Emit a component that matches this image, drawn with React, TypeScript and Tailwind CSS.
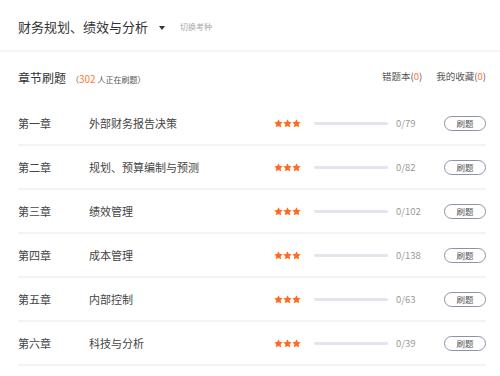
import React from "react";

const chapters = [
  { no: "第一章", name: "外部财务报告决策", total: 79 },
  { no: "第二章", name: "规划、预算编制与预测", total: 82 },
  { no: "第三章", name: "绩效管理", total: 102 },
  { no: "第四章", name: "成本管理", total: 138 },
  { no: "第五章", name: "内部控制", total: 63 },
  { no: "第六章", name: "科技与分析", total: 39 },
];

const Star = () => (
  <svg width="9" height="9" viewBox="0 0 24 24" fill="#ff6a1f">
    <path d="M12 0.5l3.5 7.3 8 1-5.9 5.5 1.6 8L12 18.4l-7.2 3.9 1.6-8L0.5 8.8l8-1z" />
  </svg>
);

export default function App() {
  return (
    <div
      className="w-[500px] h-[376px] bg-white overflow-hidden"
      style={{ fontFamily: '"Microsoft YaHei", "Noto Sans CJK SC", sans-serif' }}
    >
      <div className="flex items-center h-[50px] pl-[18px] pt-[4px]">
        <span className="text-[13px] text-[#333]">财务规划、绩效与分析</span>
        <span className="ml-[11px] mt-[1px] w-0 h-0 border-l-[3px] border-r-[3px] border-t-[4px] border-l-transparent border-r-transparent border-t-[#333]" />
        <span className="ml-[15px] text-[8px] text-[#aaa]">切换考种</span>
      </div>
      <div className="h-[2px] bg-[#f5f5f5]" />

      <div className="pl-[18px] pr-[14px]">
        <div className="flex items-center justify-between h-[50px] pt-[2px]">
          <div className="flex items-baseline">
            <span className="text-[12px] text-[#333]">章节刷题</span>
            <span className="ml-[5px] text-[8px] text-[#555]">
              （<span className="text-[10px] text-[#ff7a33]">302</span> 人正在刷题）
            </span>
          </div>
          <div className="flex gap-[14px] text-[9.5px] text-[#555] pb-[4px]">
            <span>
              错题本(<span className="text-[#ff7a33]">0</span>)
            </span>
            <span>
              我的收藏(<span className="text-[#ff7a33]">0</span>)
            </span>
          </div>
        </div>

        <div>
          {chapters.map((c) => (
            <div
              key={c.no}
              className="flex items-center h-[44px] border-b-2 border-[#f3f3f3]"
            >
              <span className="w-[71px] text-[11px] text-[#444]">{c.no}</span>
              <span className="w-[185px] text-[11px] text-[#444]">{c.name}</span>
              <span className="flex gap-0">
                <Star />
                <Star />
                <Star />
              </span>
              <span className="ml-[13px] w-[74px] h-[3px] rounded-full bg-[#e4e4ec]" />
              <span className="ml-[8px] w-[48px] text-[9.5px] text-[#999]">0/{c.total}</span>
              <button className="ml-auto w-[42px] h-[15px] rounded-full border border-[#9090a8] text-[8.5px] leading-none text-[#555] flex items-center justify-center">
                刷题
              </button>
            </div>
          ))}
        </div>
      </div>
    </div>
  );
}
